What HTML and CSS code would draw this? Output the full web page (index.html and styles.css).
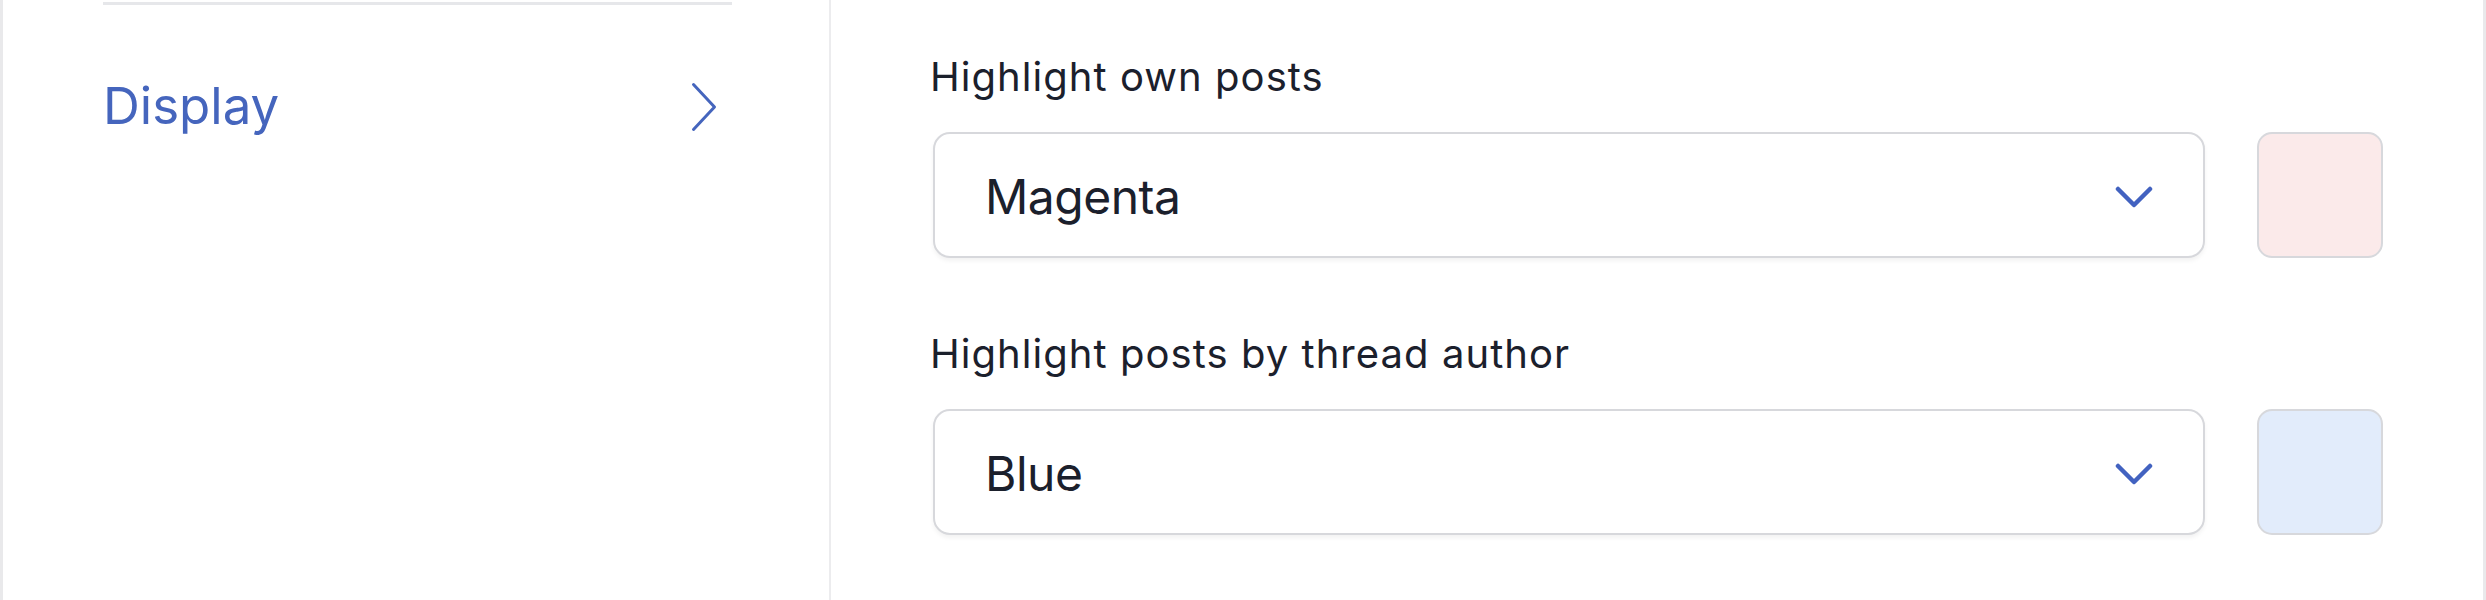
FILE: index.html
```html
<!DOCTYPE html>
<html lang="en">
<head>
<meta charset="utf-8">
<title>Display settings</title>
<link rel="stylesheet" href="styles.css">
</head>
<body>
<div class="page">
  <aside class="sidebar">
    <div class="sidebar-rule"></div>
    <a class="nav-item" href="#">
      <span class="nav-label">Display</span>
      <svg class="nav-chevron" width="26" height="50" viewBox="0 0 26 50" aria-hidden="true">
        <path d="M2.5 2.5 L23.5 25 L2.5 47.5" fill="none" stroke="#4565bd" stroke-width="3" stroke-linecap="round" stroke-linejoin="round"/>
      </svg>
    </a>
  </aside>
  <main class="main">
    <div class="field">
      <label class="field-label">Highlight own posts</label>
      <div class="field-row">
        <div class="select">
          <span class="select-value">Magenta</span>
          <svg class="select-chevron" width="38" height="22" viewBox="0 0 38 22" aria-hidden="true">
            <path d="M3 3 L19 19 L35 3" fill="none" stroke="#4262c0" stroke-width="4.5" stroke-linecap="round" stroke-linejoin="round"/>
          </svg>
        </div>
        <div class="swatch swatch-magenta"></div>
      </div>
    </div>
    <div class="field">
      <label class="field-label">Highlight posts by thread author</label>
      <div class="field-row">
        <div class="select">
          <span class="select-value">Blue</span>
          <svg class="select-chevron" width="38" height="22" viewBox="0 0 38 22" aria-hidden="true">
            <path d="M3 3 L19 19 L35 3" fill="none" stroke="#4262c0" stroke-width="4.5" stroke-linecap="round" stroke-linejoin="round"/>
          </svg>
        </div>
        <div class="swatch swatch-blue"></div>
      </div>
    </div>
  </main>
</div>
</body>
</html>
```

FILE: styles.css
```css
* {
  box-sizing: border-box;
}

html, body {
  margin: 0;
  padding: 0;
  background: #ffffff;
}

body {
  font-family: Inter, "Noto Sans", "Liberation Sans", sans-serif;
  color: #1d2330;
  width: 2486px;
  height: 600px;
  overflow: hidden;
}

.page {
  display: flex;
  height: 600px;
  border-left: 3px solid #e9e9eb;
  border-right: 3px solid #e9e9eb;
}

.sidebar {
  width: 828px;
  flex: 0 0 828px;
  border-right: 2px solid #ececee;
  padding-left: 100px;
  padding-top: 2px;
}

.sidebar-rule {
  width: 629px;
  height: 3px;
  background: #e6e7ea;
}

.nav-item {
  display: flex;
  align-items: center;
  justify-content: space-between;
  width: 629px;
  padding: 70px 15px 0 0;
  text-decoration: none;
}

.nav-label {
  font-size: 51px;
  line-height: 62px;
  color: #4565bd;
  letter-spacing: 0;
}

.nav-chevron {
  display: block;
  margin-top: 2px;
}

.main {
  flex: 1;
  padding: 53px 100px 0 102px;
}

.field {
  display: flex;
  flex-direction: column;
  gap: 32px;
}

.field + .field {
  margin-top: 72px;
}

.field-label {
  font-size: 40px;
  line-height: 47px;
  color: #1b202c;
  letter-spacing: 1.05px;
  margin-left: -3px;
}

.field-row {
  display: flex;
  align-items: center;
  gap: 52px;
}

.select {
  flex: 1;
  height: 126px;
  display: flex;
  align-items: center;
  justify-content: space-between;
  padding: 0 50px 0 50px;
  border: 2px solid #d7d8dc;
  border-radius: 17px;
  background: #ffffff;
  box-shadow: 0 3px 4px rgba(0, 0, 0, 0.05);
}

.select-value {
  font-size: 48px;
  line-height: 58px;
  color: #1b202c;
  letter-spacing: -0.5px;
  margin-top: 3px;
}

.select-chevron {
  display: block;
  margin-top: 4px;
}

.swatch {
  width: 126px;
  height: 126px;
  flex: 0 0 126px;
  border: 2px solid #d7d8dc;
  border-radius: 15px;
}

.swatch-magenta {
  background: #fbeaea;
}

.swatch-blue {
  background: #e2ecfb;
}
```
